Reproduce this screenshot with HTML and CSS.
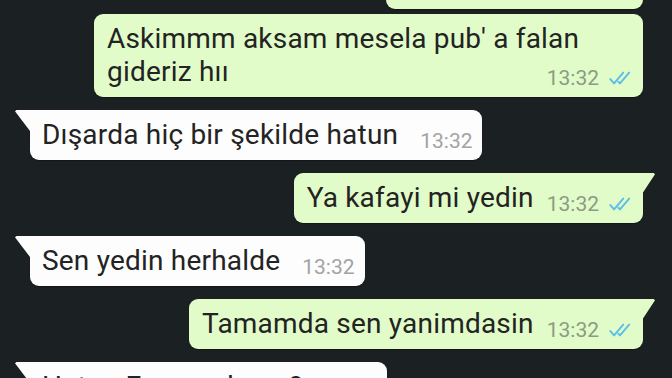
FILE: index.html
```html
<!DOCTYPE html>
<html lang="tr">
<head>
<meta charset="utf-8">
<title>Sohbet</title>
<link rel="stylesheet" href="styles.css">
</head>
<body>
<div class="chat">
  <div class="msg out tail"><span class="text">Olur askim</span><span class="meta"><span class="time">13:32</span><svg class="ticks" viewBox="0 0 22 13"><path d="M2 7.5 L5.5 11.5 L14 1.5 M9.5 10 L11 11.5 L19.5 1.5"/></svg></span></div>
  <div class="msg out cont"><span class="text">Askimmm aksam mesela pub' a falan gideriz hıı</span><span class="meta"><span class="time">13:32</span><svg class="ticks" viewBox="0 0 22 13"><path d="M2 7.5 L5.5 11.5 L14 1.5 M9.5 10 L11 11.5 L19.5 1.5"/></svg></span></div>
  <div class="msg in tail"><span class="text">Dışarda hiç bir şekilde hatun</span><span class="meta"><span class="time">13:32</span></span></div>
  <div class="msg out tail"><span class="text">Ya kafayi mi yedin</span><span class="meta"><span class="time">13:32</span><svg class="ticks" viewBox="0 0 22 13"><path d="M2 7.5 L5.5 11.5 L14 1.5 M9.5 10 L11 11.5 L19.5 1.5"/></svg></span></div>
  <div class="msg in tail"><span class="text">Sen yedin herhalde</span><span class="meta"><span class="time">13:32</span></span></div>
  <div class="msg out tail"><span class="text">Tamamda sen yanimdasin</span><span class="meta"><span class="time">13:32</span><svg class="ticks" viewBox="0 0 22 13"><path d="M2 7.5 L5.5 11.5 L14 1.5 M9.5 10 L11 11.5 L19.5 1.5"/></svg></span></div>
  <div class="msg in tail"><span class="text">Hatun Emre yok mu?</span><span class="meta"><span class="time">13:33</span></span></div>
</div>
</body>
</html>
```
FILE: styles.css
```css
html, body {
  margin: 0;
  padding: 0;
  background: #1b2023;
  height: 100%;
  overflow: hidden;
}

.chat {
  display: flex;
  flex-direction: column;
  margin-top: -41px;
  font-family: Roboto, "Noto Sans", sans-serif;
}

.msg {
  position: relative;
  box-sizing: border-box;
  width: fit-content;
  max-width: 549px;
  min-height: 50px;
  padding: 8px 11px 9px 13px;
  border-radius: 9px;
  font-size: 28px;
  line-height: 33px;
  letter-spacing: 0.2px;
  color: #232323;
  margin-top: 13px;
  box-shadow: 0 1px 1px rgba(0, 0, 0, 0.35);
}

.msg:first-child {
  margin-top: 0;
}

.msg.cont {
  margin-top: 5px;
}

.out {
  align-self: flex-end;
  margin-right: 29px;
  background: #e1fcc8;
}

.in {
  align-self: flex-start;
  margin-left: 30px;
  background: #fdfdfd;
  padding-left: 12px;
  padding-right: 10px;
}

.meta {
  float: right;
  display: flex;
  align-items: center;
  margin: 13px 0 -4px 13px;
  font-size: 21px;
  line-height: 21px;
  letter-spacing: 0;
}

.in .meta {
  margin-left: 22px;
}

.out .time {
  color: #8c9b84;
}

.in .time {
  color: #a3a3a3;
}

.ticks {
  width: 24px;
  height: 14px;
  margin-left: 9px;
  margin-top: -1px;
  fill: none;
  stroke: #5bbfe8;
  stroke-width: 1.8;
  stroke-linecap: round;
  stroke-linejoin: round;
}

.out.tail {
  border-top-right-radius: 0;
}

.in.tail {
  border-top-left-radius: 0;
}

.tail::after {
  content: "";
  position: absolute;
  top: 0;
  width: 13px;
  height: 21px;
  background: inherit;
}

.out.tail::after {
  right: -12px;
  clip-path: polygon(0 0, 90% 0, 100% 6%, 0 100%);
}

.in.tail::after {
  left: -15px;
  width: 15px;
  clip-path: polygon(10% 0, 100% 0, 100% 100%, 0 6%);
}
```
